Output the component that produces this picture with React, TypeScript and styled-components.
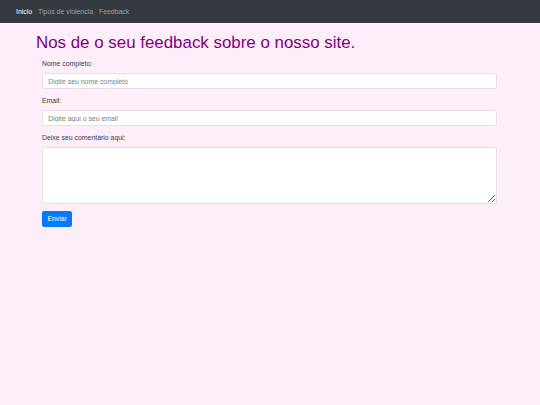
import React from "react";
import styled, { createGlobalStyle } from "styled-components";

const GlobalStyle = createGlobalStyle`
  * {
    box-sizing: border-box;
  }
  html, body {
    margin: 0;
    padding: 0;
    background: #fdeefa;
    font-family: "Liberation Sans", Arial, sans-serif;
    color: #212529;
  }
`;

const navItems = [
  { label: "Inicio", active: true },
  { label: "Tipos de violencia", active: false },
  { label: "Feedback", active: false },
];

function App() {
  return (
    <>
      <GlobalStyle />
      <Navbar>
        <NavList>
          {navItems.map((item) => (
            <NavLink key={item.label} href="#" $active={item.active}>
              {item.label}
            </NavLink>
          ))}
        </NavList>
      </Navbar>
      <Page>
        <Title>Nos de o seu feedback sobre o nosso site.</Title>
        <Form onSubmit={(e) => e.preventDefault()}>
          <FormGroup>
            <Label htmlFor="nome">Nome completo:</Label>
            <Input id="nome" type="text" placeholder="Digite seu nome completo" />
          </FormGroup>
          <FormGroup>
            <Label htmlFor="email">Email:</Label>
            <Input id="email" type="email" placeholder="Digite aqui o seu email" />
          </FormGroup>
          <FormGroup>
            <Label htmlFor="comentario">Deixe seu comentário aqui:</Label>
            <TextArea id="comentario" />
          </FormGroup>
          <SubmitButton type="submit">Enviar</SubmitButton>
        </Form>
      </Page>
    </>
  );
}

const Navbar = styled.nav`
  height: 23px;
  background: #343a40;
  display: flex;
  align-items: center;
  padding: 0 13px;
`;

const NavList = styled.div`
  display: flex;
`;

const NavLink = styled.a<{ $active: boolean }>`
  font-size: 6.9px;
  line-height: 10px;
  padding: 0 3px;
  text-decoration: none;
  color: ${(p) => (p.$active ? "#ffffff" : "rgba(255, 255, 255, 0.5)")};
`;

const Page = styled.main`
  padding: 10px 43px 0 36px;
`;

const Title = styled.h1`
  margin: 0 0 6px;
  font-size: 16.9px;
  line-height: 1.2;
  font-weight: 500;
  color: #800080;
`;

const Form = styled.form`
  display: flex;
  flex-direction: column;
  padding-left: 6px;
`;

const FormGroup = styled.div`
  display: flex;
  flex-direction: column;
  margin-bottom: 6.9px;
`;

const Label = styled.label`
  font-size: 6.9px;
  line-height: 1.5;
  margin-bottom: 3.4px;
  color: #3c3c3c;
`;

const Input = styled.input`
  display: block;
  height: 16.4px;
  padding: 2.6px 5.2px;
  font-family: inherit;
  font-size: 6.9px;
  line-height: 1.5;
  background: #ffffff;
  border: 1px solid #e8dfe6;
  border-radius: 2px;
  color: #495057;
  outline: none;

  &::placeholder {
    color: #7a7f85;
  }
`;

const TextArea = styled.textarea`
  display: block;
  height: 56.6px;
  padding: 2.6px 5.2px;
  font-family: inherit;
  font-size: 6.9px;
  background: #ffffff;
  border: 1px solid #e8dfe6;
  border-radius: 2px;
  outline: none;
`;

const SubmitButton = styled.button`
  display: block;
  align-self: flex-start;
  height: 16.4px;
  padding: 2.6px 4.4px;
  font-family: inherit;
  font-size: 6.9px;
  line-height: 1.5;
  color: #ffffff;
  background: #007bff;
  border: 1px solid #007bff;
  border-radius: 2px;
  cursor: pointer;
`;

export default App;
